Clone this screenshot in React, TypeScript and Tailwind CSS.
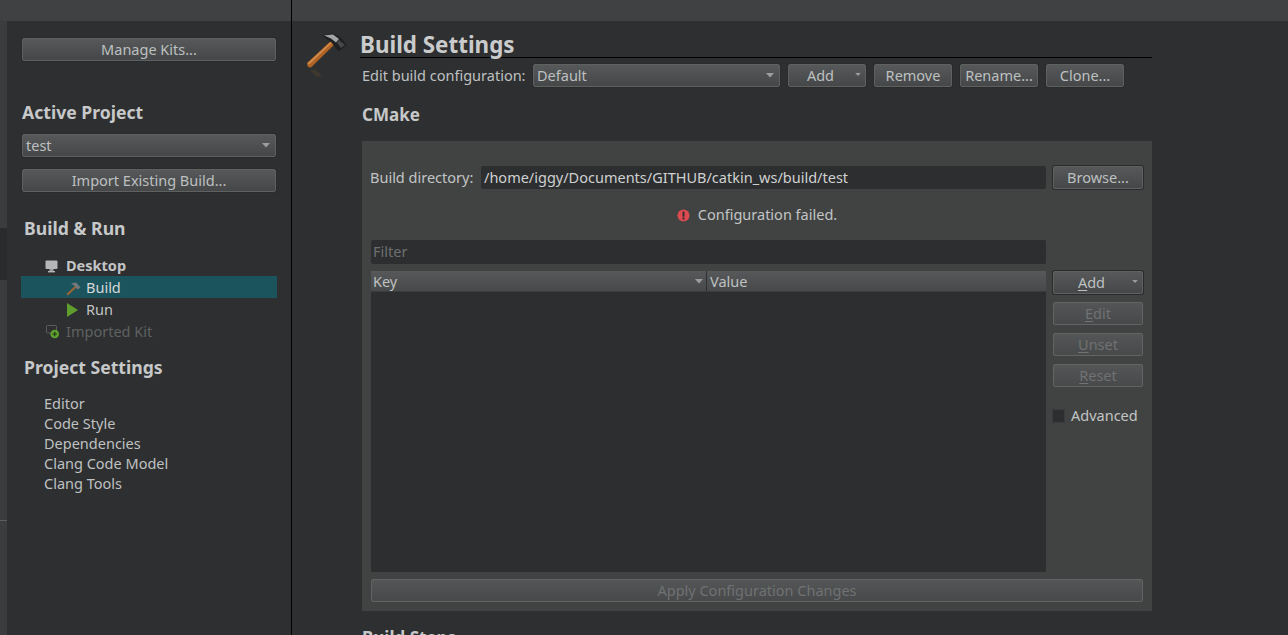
import React from "react";

function Caret({ className = "" }: { className?: string }) {
  return (
    <svg width="8" height="5" viewBox="0 0 8 5" className={className}>
      <path d="M0 0h8L4 4.6z" fill="#9c9e9e" />
    </svg>
  );
}

const btn =
  "flex items-center justify-center h-[23px] rounded-[2px] border border-[#5f6161] bg-gradient-to-b from-[#565859] to-[#454748] text-[#bdc0c1] text-[14.5px] shadow-[0_0_0_1px_#2a2b2c]";
const btnOff =
  "flex items-center justify-center h-[23px] rounded-[2px] border border-[#626464] bg-gradient-to-b from-[#535556] to-[#47494a] text-[#707273] text-[14.5px]";

function Btn({ children, className = "" }: { children: React.ReactNode; className?: string }) {
  return <div className={`${btn} ${className}`}>{children}</div>;
}

function BigHammer() {
  return (
    <svg width="42" height="50" viewBox="0 0 42 50" className="shrink-0">
      <defs>
        <linearGradient id="handle" x1="0" y1="0" x2="1" y2="1">
          <stop offset="0" stopColor="#c97a36" />
          <stop offset="1" stopColor="#984e18" />
        </linearGradient>
      </defs>
      <path d="M1 31 L28 6 L32 9 L5 35.5 Q3 36 1.5 34 Z" fill="url(#handle)" />
      <path d="M2 31 L28 7 L29 8 L3 32.5 Z" fill="#d48e4c" />
      <path d="M16.5 3.5 L27 1.5 L34 5 L41 13 L32.5 19.5 L26 11 L20 6.5 Z" fill="#1f2021" />
      <path d="M18 3.5 L27 2.5 L33 7 L30 10.5 L25 6.5 Z" fill="#a3a5a6" />
      <path d="M33 8 L39 13 L35 16 L31 11 Z" fill="#46484a" />
      <path d="M4 38 L10 38 L16 44 L11 45 Z" fill="#40382f" />
    </svg>
  );
}

function SmallHammer() {
  return (
    <svg width="16" height="16" viewBox="0 0 16 16">
      <path d="M1.5 14 L10.5 5.5 L12 7 L3 15.5 Z" fill="#9c6434" />
      <path d="M6 3.2 L11 2.5 L15.5 7.5 L12.5 9.5 L9 5.5 Z" fill="#75787a" />
    </svg>
  );
}

function Monitor() {
  return (
    <svg width="13" height="13" viewBox="0 0 13 13">
      <rect x="0.5" y="0.5" width="12" height="8.5" rx="1" fill="#b4b6b7" />
      <rect x="4.5" y="9" width="4" height="2" fill="#9a9c9d" />
      <rect x="3" y="11" width="7" height="1.4" fill="#b4b6b7" />
    </svg>
  );
}

function ImportedIcon() {
  return (
    <svg width="14" height="14" viewBox="0 0 14 14">
      <rect x="0.5" y="0.5" width="10" height="7.5" rx="1" fill="none" stroke="#5a5c5d" />
      <circle cx="8.7" cy="9" r="4.3" fill="#5fa32d" />
      <path d="M8.7 6.7v4.6M6.4 9h4.6" stroke="#23301b" strokeWidth="1.2" />
    </svg>
  );
}

function Alert() {
  return (
    <svg width="13" height="13" viewBox="0 0 13 13">
      <circle cx="6.5" cy="6.5" r="6" fill="#dd4a50" />
      <rect x="5.5" y="2.6" width="2" height="5" fill="#2f2f2f" />
      <rect x="5.5" y="8.5" width="2" height="2" fill="#2f2f2f" />
    </svg>
  );
}

function Sidebar() {
  return (
    <aside className="w-[285px] shrink-0 border-r border-black flex flex-col">
      <div className="h-[21px] bg-[#404142] shrink-0" />
      <div className="flex flex-col pl-[15px] pr-[15px]">
        <Btn className="mt-[17px]">Manage Kits...</Btn>
        <h2 className="mt-[39px] h-[24px] leading-[24px] text-[17.6px] font-bold text-[#c6c8c9]">Active Project</h2>
        <div className={`${btn} mt-[10px] !justify-between pl-[3px] pr-[5px]`}>
          <span>test</span>
          <Caret />
        </div>
        <Btn className="mt-[12px]">Import Existing Build...</Btn>
        <h2 className="mt-[24px] h-[24px] leading-[24px] text-[17.6px] font-bold text-[#c6c8c9] ml-[2px]">Build &amp; Run</h2>
      </div>
      <div className="mt-[13px] flex flex-col pl-[14px] pr-[14px] text-[14.5px] text-[#c2c4c5]">
        <div className="h-[23px] pt-[3px] flex items-center pl-[24px] gap-[8px] font-bold">
          <Monitor />
          <span>Desktop</span>
        </div>
        <div className="h-[22px] pt-px flex items-center pl-[44px] bg-[#1c545e] gap-[5px] text-[#d5d7d8]">
          <SmallHammer />
          <span>Build</span>
        </div>
        <div className="h-[22px] pt-px flex items-center pl-[46px] gap-[8px]">
          <svg width="11" height="14" viewBox="0 0 11 14"><path d="M0 0 L11 7 L0 14Z" fill="#5f9e2c" /></svg>
          <span>Run</span>
        </div>
        <div className="h-[22px] pt-px flex items-center pl-[25px] gap-[6px] text-[#5f6162]">
          <ImportedIcon />
          <span>Imported Kit</span>
        </div>
      </div>
      <div className="flex flex-col pl-[17px]">
        <h2 className="mt-[13px] h-[24px] leading-[24px] text-[17.6px] font-bold text-[#c6c8c9]">Project Settings</h2>
        <ul className="mt-[14px] pl-[20px] text-[14.5px] text-[#bfc1c2] leading-[20px]">
          <li>Editor</li>
          <li>Code Style</li>
          <li>Dependencies</li>
          <li>Clang Code Model</li>
          <li>Clang Tools</li>
        </ul>
      </div>
    </aside>
  );
}

function Main() {
  return (
    <main className="flex-1 min-w-0 flex flex-col">
      <div className="h-[21px] bg-[#404142] shrink-0" />
      <div className="flex pl-[14px]">
        <div className="pt-[11px] w-[54px] shrink-0">
          <BigHammer />
        </div>
        <div className="w-[792px] shrink-0">
          <div className="mt-[7px] h-[30px] border-b border-black">
            <h1 className="text-[22.4px] leading-[34px] font-bold text-[#c9cbcc]">Build Settings</h1>
          </div>
          <div className="pl-[2px] mt-[6px] flex items-center h-[23px] text-[14.5px] text-[#bfc1c2]">
            <span className="w-[171px] shrink-0">Edit build configuration:</span>
            <div className={`${btn} w-[247px] !justify-between pl-[3px] pr-[5px]`}>
              <span>Default</span>
              <Caret />
            </div>
            <div className={`${btn} w-[78px] ml-[8px] relative pr-[13px]`}>
              Add
              <Caret className="absolute right-[3px] top-[7px] scale-75" />
            </div>
            <Btn className="w-[78px] ml-[8px]">Remove</Btn>
            <Btn className="w-[78px] ml-[8px]">Rename...</Btn>
            <Btn className="w-[78px] ml-[8px]">Clone...</Btn>
          </div>
          <h2 className="mt-[17px] ml-[2px] h-[22px] leading-[22px] text-[17px] font-bold text-[#c6c8c9]">CMake</h2>
          <section className="mt-[15px] ml-[2px] h-[470px] bg-[#414342] pl-[9px] pr-[9px] flex flex-col">
            <div className="mt-[25px] flex items-center h-[23px] text-[14.5px] text-[#c2c4c5]">
              <span className="w-[110px] shrink-0 whitespace-nowrap -ml-px">Build directory:</span>
              <div className="w-[565px] h-[23px] ml-px bg-[#2d2e2f] rounded-[2px] flex items-center pl-[3px] text-[#cfd1d2] shrink-0">
                /home/iggy/Documents/GITHUB/catkin_ws/build/test
              </div>
              <Btn className="w-[90px] ml-[7px] shrink-0">Browse...</Btn>
            </div>
            <div className="mt-[16px] h-[20px] flex items-center justify-center gap-[8px] text-[14.5px] text-[#c2c4c5]">
              <Alert />
              <span>Configuration failed.</span>
            </div>
            <div className="mt-[15px] w-[675px] h-[24px] bg-[#2d2e2f] rounded-[2px] flex items-center pl-[2px] text-[14.5px] text-[#6c6e6f]">
              Filter
            </div>
            <div className="mt-[7px] flex">
              <div className="w-[675px] h-[301px] shrink-0 bg-[#2d2e2f] flex flex-col">
                <div className="h-[21px] flex bg-gradient-to-b from-[#565859] to-[#47494a] border-b border-[#3a3b3c] text-[14.5px] text-[#bfc1c2]">
                  <div className="w-[336px] pl-[2px] pr-[2px] pt-px flex items-center justify-between border-r border-[#2f3031]">
                    <span>Key</span>
                    <Caret className="mr-[1px]" />
                  </div>
                  <div className="pl-[3px] pt-px flex items-center">Value</div>
                </div>
              </div>
              <div className="ml-[7px] w-[90px] flex flex-col">
                <div className={`${btn} relative pr-[13px]`}>
                  <span><span className="underline underline-offset-2">A</span>dd</span>
                  <Caret className="absolute right-[3px] top-[7px] scale-75" />
                </div>
                <div className={`${btnOff} mt-[8px]`}><span><span className="underline underline-offset-2">E</span>dit</span></div>
                <div className={`${btnOff} mt-[8px]`}><span><span className="underline underline-offset-2">U</span>nset</span></div>
                <div className={`${btnOff} mt-[8px]`}><span><span className="underline underline-offset-2">R</span>eset</span></div>
                <div className="mt-[20px] -ml-px flex items-center gap-[6px] text-[14.5px] text-[#c2c4c5] h-[18px]">
                  <div className="w-[13px] h-[14px] bg-[#2d2e2f] border border-[#3a3b3c]" />
                  <span>Advanced</span>
                </div>
              </div>
            </div>
            <div className={`${btnOff} mt-[7px]`}>Apply Configuration Changes</div>
          </section>
          <h2 className="mt-[16px] ml-[2px] h-[22px] leading-[22px] text-[17px] font-bold text-[#c6c8c9]">Build Steps</h2>
        </div>
      </div>
    </main>
  );
}

export default function App() {
  return (
    <div
      className="w-[1288px] h-[635px] overflow-hidden flex bg-[#2e2f30]"
      style={{ fontFamily: '"Noto Sans", "Open Sans", sans-serif' }}
    >
      <div className="w-[7px] shrink-0 flex flex-col bg-[#3b3c3d]">
        <div className="h-[21px] bg-[#404142]" />
        <div className="h-[207px]" />
        <div className="h-[52px] bg-[#2a2b2c]" />
        <div className="h-[240px]" />
        <div className="h-px bg-[#5c5d5e]" />
      </div>
      <Sidebar />
      <Main />
    </div>
  );
}
